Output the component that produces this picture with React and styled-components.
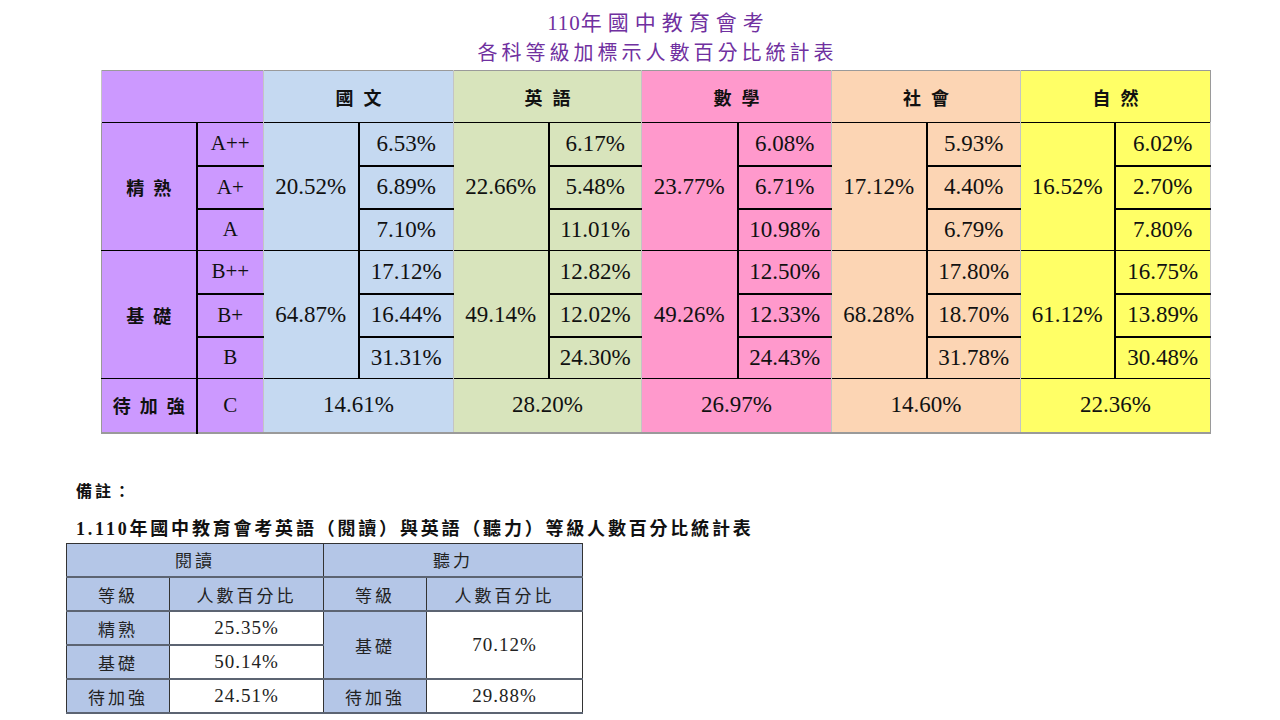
import React from 'react'
import styled, { createGlobalStyle } from 'styled-components'

const GlobalStyle = createGlobalStyle`
  html, body {
    margin: 0;
    padding: 0;
    background: #ffffff;
  }
  body {
    font-family: "Liberation Serif", "Noto Sans CJK TC", serif;
    color: #111;
  }
`;

const subjects = [
  { name: '國文', bg: '#C5D9F1', top: '20.52%', topRows: ['6.53%', '6.89%', '7.10%'], base: '64.87%', baseRows: ['17.12%', '16.44%', '31.31%'], c: '14.61%' },
  { name: '英語', bg: '#D8E4BC', top: '22.66%', topRows: ['6.17%', '5.48%', '11.01%'], base: '49.14%', baseRows: ['12.82%', '12.02%', '24.30%'], c: '28.20%' },
  { name: '數學', bg: '#FF99CC', top: '23.77%', topRows: ['6.08%', '6.71%', '10.98%'], base: '49.26%', baseRows: ['12.50%', '12.33%', '24.43%'], c: '26.97%' },
  { name: '社會', bg: '#FCD5B4', top: '17.12%', topRows: ['5.93%', '4.40%', '6.79%'], base: '68.28%', baseRows: ['17.80%', '18.70%', '31.78%'], c: '14.60%' },
  { name: '自然', bg: '#FFFF66', top: '16.52%', topRows: ['6.02%', '2.70%', '7.80%'], base: '61.12%', baseRows: ['16.75%', '13.89%', '30.48%'], c: '22.36%' },
];

const PURPLE = '#CC99FF';
const SEP = '1px solid #c4c4c4';

const Page = styled.div`
  width: 1280px;
  height: 720px;
  overflow: hidden;
`;

const Title = styled.header`
  width: 1109px;
  margin-left: 101px;
  padding-top: 8px;
  text-align: center;
  color: #7030A0;
  font-family: "Liberation Serif", "Noto Sans CJK TC", serif;
`;

const TitleLine = styled.div`
  font-size: ${p => p.$size}px;
  letter-spacing: ${p => p.$gap}px;
  padding-left: ${p => p.$gap}px;
  line-height: 30px;
`;

const Digits = styled.span`
  letter-spacing: 1px;
`;

const Grid = styled.table`
  border-collapse: collapse;
  table-layout: fixed;
  width: 1109px;
  margin: 2px 0 0 101px;
  border: 1px solid #9a9a9a;
  border-bottom: 2px solid #9a9a9a;
`;

const Row = styled.tr`
  height: ${p => p.$h}px;
  border-top: ${p => (p.$rule ? '1px solid #000' : 'none')};
`;

const HeadCell = styled.th`
  background: ${p => p.$bg};
  font-family: "Noto Sans CJK TC", sans-serif;
  font-weight: 700;
  font-size: 18px;
  letter-spacing: 10px;
  padding: 0 0 0 10px;
  border-left: ${SEP};
  text-align: center;
`;

const GroupCell = styled.td`
  background: ${PURPLE};
  font-family: "Noto Sans CJK TC", sans-serif;
  font-weight: 700;
  font-size: 18px;
  letter-spacing: 9px;
  padding: 0 0 0 9px;
  text-align: center;
  border-right: 2px solid #000;
`;

const GradeCell = styled.td`
  background: ${PURPLE};
  font-size: 21px;
  text-align: center;
  padding: 0;
  border-bottom: ${p => (p.$thick ? '2px solid #000' : 'none')};
`;

const ValueCell = styled.td`
  background: ${p => p.$bg};
  font-size: 23px;
  text-align: center;
  padding: 0;
  border-left: ${p => (p.$split ? '2px solid #000' : SEP)};
  border-right: ${p => (p.$split ? SEP : 'none')};
  border-bottom: ${p => (p.$thick ? '2px solid #000' : 'none')};
`;

const Note = styled.p`
  margin: 44px 0 0 0;
  padding-left: 76px;
  font-family: "Noto Sans CJK TC", sans-serif;
  font-weight: 700;
  font-size: 16px;
  letter-spacing: 3px;
  line-height: 24px;
`;

const Caption = styled.p`
  margin: 14px 0 0 0;
  padding-left: 76px;
  font-family: "Liberation Serif", "Noto Sans CJK TC", serif;
  font-weight: 700;
  font-size: 18px;
  letter-spacing: 2.8px;
  line-height: 26px;
`;

const SubGrid = styled.table`
  border-collapse: collapse;
  table-layout: fixed;
  width: 516px;
  margin: 1px 0 0 66px;
  border: 1px solid #333;
`;

const SubRow = styled.tr`
  height: 34px;
`;

const SubCell = styled.td`
  background: ${p => (p.$head ? '#B4C6E7' : '#ffffff')};
  font-family: ${p => (p.$num ? '"Liberation Serif", serif' : '"Noto Sans CJK TC", sans-serif')};
  font-size: ${p => (p.$num ? 19 : 17)}px;
  letter-spacing: ${p => (p.$num ? 1 : 3)}px;
  padding: 0;
  text-align: center;
  color: #222;
  border-left: 1px solid #333;
  border-right: 1px solid #333;
  border-bottom: 2px solid #5c6472;
`;

const widths = [95, 67, 95, 95, 95, 93, 96, 94, 95, 94, 94, 96];

const GroupRows = ({ label, grades, mergedKey, rowsKey, heights }) =>
  grades.map((g, i) => (
    <Row key={g} $h={heights[i]} $rule={i === 0}>
      {i === 0 && <GroupCell rowSpan={3}>{label}</GroupCell>}
      <GradeCell $thick={i < 2}>{g}</GradeCell>
      {subjects.map(s => (
        <React.Fragment key={s.name}>
          {i === 0 && <ValueCell rowSpan={3} $bg={s.bg}>{s[mergedKey]}</ValueCell>}
          <ValueCell $bg={s.bg} $split $thick={i < 2}>{s[rowsKey][i]}</ValueCell>
        </React.Fragment>
      ))}
    </Row>
  ));

const App = () => {
  return (
    <Page>
      <GlobalStyle />
      <Title>
        <TitleLine $size={21} $gap={6}><Digits>110</Digits>年國中教育會考</TitleLine>
        <TitleLine $size={20} $gap={4}>各科等級加標示人數百分比統計表</TitleLine>
      </Title>

      <Grid>
        <colgroup>
          {widths.map((w, i) => <col key={i} style={{ width: w }} />)}
        </colgroup>
        <tbody>
          <Row $h={52}>
            <HeadCell colSpan={2} $bg={PURPLE} />
            {subjects.map(s => (
              <HeadCell key={s.name} colSpan={2} $bg={s.bg}>{s.name}</HeadCell>
            ))}
          </Row>
          <GroupRows label="精熟" grades={['A++', 'A+', 'A']} mergedKey="top" rowsKey="topRows" heights={[43, 43, 42]} />
          <GroupRows label="基礎" grades={['B++', 'B+', 'B']} mergedKey="base" rowsKey="baseRows" heights={[43, 43, 42]} />
          <Row $h={54} $rule>
            <GroupCell>待加強</GroupCell>
            <GradeCell>C</GradeCell>
            {subjects.map(s => (
              <ValueCell key={s.name} colSpan={2} $bg={s.bg}>{s.c}</ValueCell>
            ))}
          </Row>
        </tbody>
      </Grid>

      <Note>備註：</Note>
      <Caption>1.110年國中教育會考英語（閱讀）與英語（聽力）等級人數百分比統計表</Caption>

      <SubGrid>
        <colgroup>
          <col style={{ width: 103 }} />
          <col style={{ width: 154 }} />
          <col style={{ width: 103 }} />
          <col style={{ width: 156 }} />
        </colgroup>
        <tbody>
          <SubRow>
            <SubCell $head colSpan={2}>閱讀</SubCell>
            <SubCell $head colSpan={2}>聽力</SubCell>
          </SubRow>
          <SubRow>
            <SubCell $head>等級</SubCell>
            <SubCell $head>人數百分比</SubCell>
            <SubCell $head>等級</SubCell>
            <SubCell $head>人數百分比</SubCell>
          </SubRow>
          <SubRow>
            <SubCell $head>精熟</SubCell>
            <SubCell $num>25.35%</SubCell>
            <SubCell $head rowSpan={2}>基礎</SubCell>
            <SubCell $num rowSpan={2}>70.12%</SubCell>
          </SubRow>
          <SubRow>
            <SubCell $head>基礎</SubCell>
            <SubCell $num>50.14%</SubCell>
          </SubRow>
          <SubRow>
            <SubCell $head>待加強</SubCell>
            <SubCell $num>24.51%</SubCell>
            <SubCell $head>待加強</SubCell>
            <SubCell $num>29.88%</SubCell>
          </SubRow>
        </tbody>
      </SubGrid>
    </Page>
  );
}

export default App
